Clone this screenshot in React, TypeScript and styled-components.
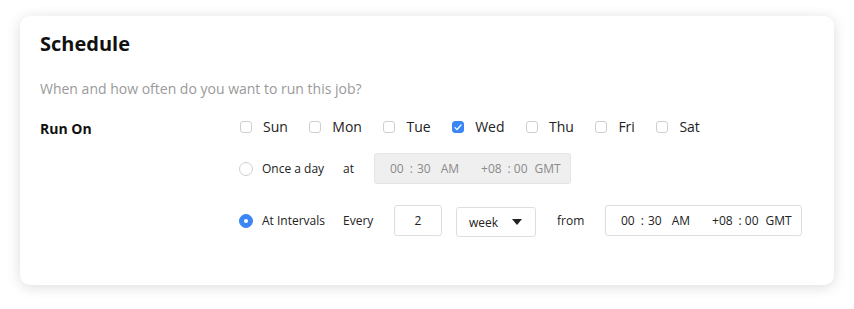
import React from 'react';
import styled, { createGlobalStyle } from 'styled-components';

const GlobalStyle = createGlobalStyle`
  html, body {
    margin: 0;
    padding: 0;
    background: #ffffff;
  }
  body {
    font-family: 'Open Sans', 'Noto Sans', sans-serif;
    color: #222;
  }
`;

const DAYS = [
  { name: 'Sun', checked: false },
  { name: 'Mon', checked: false },
  { name: 'Tue', checked: false },
  { name: 'Wed', checked: true },
  { name: 'Thu', checked: false },
  { name: 'Fri', checked: false },
  { name: 'Sat', checked: false },
];

// each part of the time field with its left margin
const TIME_PARTS = [
  { text: '00', ml: 0 },
  { text: ':', ml: 6 },
  { text: '30', ml: 4 },
  { text: 'AM', ml: 10 },
  { text: '+08', ml: 22 },
  { text: ':', ml: 6 },
  { text: '00', ml: 3 },
  { text: 'GMT', ml: 7 },
];

const TimeField = ({ disabled }: { disabled?: boolean }) => (
  <TimeBox $disabled={disabled}>
    {TIME_PARTS.map((p, i) => (
      <TimePart key={i} $ml={p.ml}>
        {p.text}
      </TimePart>
    ))}
  </TimeBox>
);

const App = () => {
  return (
    <Page>
      <GlobalStyle />
      <Card>
        <Title>Schedule</Title>
        <Subtitle>When and how often do you want to run this job?</Subtitle>
        <Form>
          <FieldLabel>Run On</FieldLabel>
          <Fields>
            <DaysRow>
              {DAYS.map((d) => (
                <DayItem key={d.name}>
                  <Checkbox $checked={d.checked}>
                    {d.checked && (
                      <svg width="8" height="7" viewBox="0 0 8 7">
                        <path
                          d="M1 3.6 L3 5.6 L7 1"
                          fill="none"
                          stroke="#fff"
                          strokeWidth="1.3"
                          strokeLinecap="round"
                          strokeLinejoin="round"
                        />
                      </svg>
                    )}
                  </Checkbox>
                  <DayText>{d.name}</DayText>
                </DayItem>
              ))}
            </DaysRow>

            <OptionRow $mt={16} $height={31}>
              <RadioOption>
                <Radio $checked={false} />
                <OptionText>Once a day</OptionText>
              </RadioOption>
              <Keyword $width={31}>at</Keyword>
              <TimeField disabled />
            </OptionRow>

            <OptionRow $mt={20} $height={33}>
              <RadioOption>
                <Radio $checked />
                <OptionText>At Intervals</OptionText>
              </RadioOption>
              <Keyword $width={51}>Every</Keyword>
              <NumberBox>2</NumberBox>
              <Select>
                <span>week</span>
                <svg width="10" height="6" viewBox="0 0 10 6">
                  <path d="M0 0 L10 0 L5 6 Z" fill="#222" />
                </svg>
              </Select>
              <Keyword $width={48} $ml={21}>
                from
              </Keyword>
              <TimeField />
            </OptionRow>
          </Fields>
        </Form>
      </Card>
    </Page>
  );
};

const Page = styled.div`
  padding: 16px 20px 24px 20px;
`;

const Card = styled.div`
  width: 814px;
  height: 269px;
  box-sizing: border-box;
  padding: 14px 20px 0 20px;
  background: #ffffff;
  border-radius: 10px;
  box-shadow: 0 2px 14px rgba(0, 0, 0, 0.14);
`;

const Title = styled.h2`
  margin: 0;
  font-size: 20px;
  line-height: 28px;
  font-weight: 700;
  color: #111;
`;

const Subtitle = styled.p`
  margin: 21px 0 0 0;
  font-size: 14px;
  line-height: 20px;
  color: #9a9a9a;
`;

const Form = styled.div`
  display: grid;
  grid-template-columns: 199px 1fr;
  margin-top: 18px;
`;

const FieldLabel = styled.div`
  font-size: 14px;
  line-height: 20px;
  font-weight: 700;
  color: #111;
  padding-top: 2px;
`;

const Fields = styled.div`
  display: flex;
  flex-direction: column;
`;

const DaysRow = styled.div`
  display: flex;
  align-items: center;
  height: 20px;
  padding-left: 1px;
`;

const DayItem = styled.label`
  display: flex;
  align-items: center;
  margin-right: 21.5px;
`;

const Checkbox = styled.span<{ $checked?: boolean }>`
  width: 12px;
  height: 12px;
  box-sizing: border-box;
  border-radius: 3px;
  display: flex;
  align-items: center;
  justify-content: center;
  border: 1px solid ${(p) => (p.$checked ? '#3b86f7' : '#cfcfcf')};
  background: ${(p) => (p.$checked ? '#3b86f7' : '#fff')};
`;

const DayText = styled.span`
  margin-left: 11px;
  font-size: 14px;
  line-height: 20px;
  color: #222;
`;

const OptionRow = styled.div<{ $mt: number; $height: number }>`
  display: flex;
  align-items: center;
  height: ${(p) => p.$height}px;
  margin-top: ${(p) => p.$mt}px;
`;

const RadioOption = styled.label`
  display: flex;
  align-items: center;
  width: 104px;
`;

const Radio = styled.span<{ $checked?: boolean }>`
  width: 14px;
  height: 14px;
  box-sizing: border-box;
  border-radius: 50%;
  border: 1px solid ${(p) => (p.$checked ? '#3b86f7' : '#cfcfcf')};
  background: ${(p) => (p.$checked ? '#3b86f7' : '#fff')};
  display: flex;
  align-items: center;
  justify-content: center;

  &::after {
    content: '';
    display: ${(p) => (p.$checked ? 'block' : 'none')};
    width: 4px;
    height: 4px;
    border-radius: 50%;
    background: #fff;
  }
`;

const OptionText = styled.span`
  margin-left: 9px;
  font-size: 12px;
  line-height: 18px;
  color: #222;
`;

const Keyword = styled.span<{ $width: number; $ml?: number }>`
  width: ${(p) => p.$width}px;
  margin-left: ${(p) => p.$ml || 0}px;
  font-size: 12px;
  line-height: 18px;
  color: #222;
`;

const TimeBox = styled.div<{ $disabled?: boolean }>`
  width: 197px;
  height: 31px;
  box-sizing: border-box;
  padding: 0 15px;
  display: flex;
  align-items: center;
  border-radius: 3px;
  border: 1px solid ${(p) => (p.$disabled ? '#e4e4e4' : '#dedede')};
  background: ${(p) => (p.$disabled ? '#efefef' : '#fff')};
  color: ${(p) => (p.$disabled ? '#8a8a8a' : '#222')};
  font-size: 12px;
`;

const TimePart = styled.span<{ $ml: number }>`
  margin-left: ${(p) => p.$ml}px;
`;

const NumberBox = styled.div`
  width: 48px;
  height: 31px;
  box-sizing: border-box;
  display: flex;
  align-items: center;
  justify-content: center;
  border: 1px solid #dedede;
  border-radius: 3px;
  font-size: 12px;
  color: #222;
`;

const Select = styled.div`
  width: 80px;
  height: 30px;
  margin-left: 14px;
  align-self: flex-end;
  box-sizing: border-box;
  padding: 0 13px 0 12px;
  display: flex;
  align-items: center;
  justify-content: space-between;
  border: 1px solid #dedede;
  border-radius: 3px;
  font-size: 12px;
  color: #222;

  span {
    margin-top: 1px;
  }
`;

export default App;
